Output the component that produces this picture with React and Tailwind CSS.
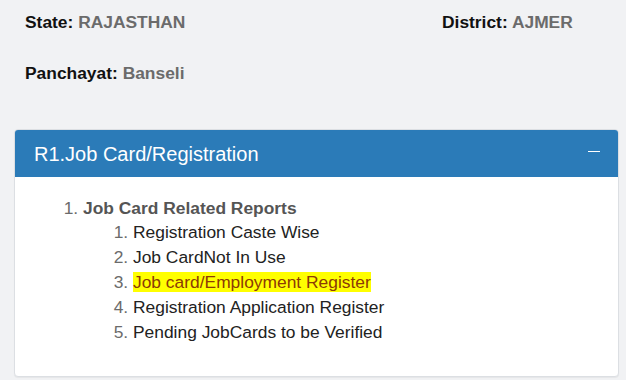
import React from "react";

const reports = [
  { label: "Registration Caste Wise" },
  { label: "Job CardNot In Use" },
  { label: "Job card/Employment Register", active: true },
  { label: "Registration Application Register" },
  { label: "Pending JobCards to be Verified" },
];

export default function App() {
  return (
    <div
      className="w-[626px] h-[380px] bg-[#f1f2f4] overflow-hidden"
      style={{ fontFamily: '"Liberation Sans", Arial, sans-serif' }}
    >
      {/* location info */}
      <div className="pl-[25px] pr-[20px] pt-[12px] text-[17.4px] font-bold leading-[20px]">
        <div className="flex">
          <div className="w-[417px] text-[#111]">
            State: <span className="text-[#6b6b6b]">RAJASTHAN</span>
          </div>
          <div className="text-[#111]">
            District: <span className="text-[#6b6b6b]">AJMER</span>
          </div>
        </div>
        <div className="mt-[31px] text-[#111]">
          Panchayat: <span className="text-[#6b6b6b]">Banseli</span>
        </div>
      </div>

      {/* panel */}
      <div className="mx-[14px] mt-[46px] w-[605px] h-[248px] bg-white border border-[#dcdfe3] rounded-[4px] overflow-hidden shadow-[0_1px_1px_rgba(0,0,0,0.05)]">
        <div className="h-[47px] bg-[#2b7bb8] flex items-center justify-between pl-[19px] pr-[18px]">
          <span className="text-white text-[20px] leading-none">R1.Job Card/Registration</span>
          <span className="block w-[12px] h-[1.5px] bg-white mt-[-4px]" />
        </div>

        <ol className="list-decimal pl-[68px] pt-[19px] text-[17.4px] marker:text-[#6b6b6b]">
          <li className="leading-[24px]">
            <span className="font-bold text-[#555]">Job Card Related Reports</span>
            <ol className="list-decimal pl-[50px] marker:text-[#6b6b6b]">
              {reports.map((r) => (
                <li key={r.label} className="leading-[25px] font-normal">
                  {r.active ? (
                    <span className="bg-[#ffff00] text-[#8c3a06]">{r.label}</span>
                  ) : (
                    <span className="text-[#222]">{r.label}</span>
                  )}
                </li>
              ))}
            </ol>
          </li>
        </ol>
      </div>
    </div>
  );
}
